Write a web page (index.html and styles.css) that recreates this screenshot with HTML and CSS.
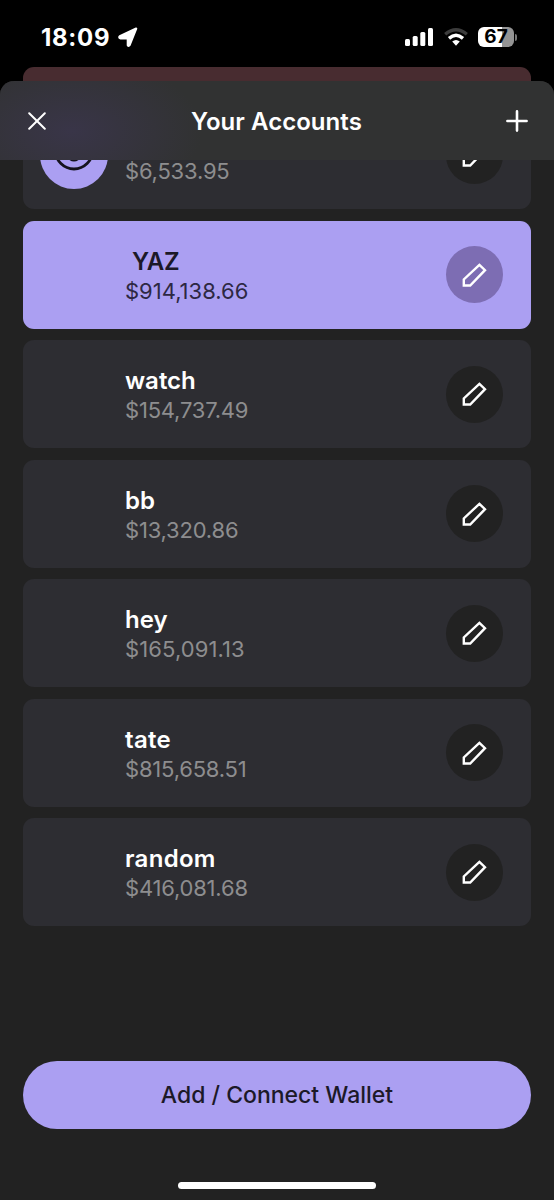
FILE: index.html
```html
<!DOCTYPE html>
<html lang="en">
<head>
<meta charset="utf-8">
<title>Your Accounts</title>
<link rel="stylesheet" href="styles.css">
</head>
<body>
<svg class="defs" width="0" height="0" aria-hidden="true">
  <symbol id="pencil" viewBox="-14 -14 28 28">
    <path d="M4.4 -10.2 L10 -4.8 L-4.8 10.5 H-11.2 V4.5 Z" fill="none" stroke="#fff" stroke-width="2.4"/>
  </symbol>
</svg>
<div class="phone">
  <div class="status">
    <div class="clock">18:09</div>
    <svg class="location" width="20" height="21" viewBox="0 0 20 21"><path d="M18.2 1.6 L11.6 18.2 Q10.6 19.6 9.8 18.2 V11.4 H2.4 Q.6 10.4 1.8 9.2 Z" fill="#fff" stroke="#fff" stroke-width="2.2" stroke-linejoin="round"/></svg>
    <svg class="signal" width="28" height="18" viewBox="0 0 28 18" fill="#fff"><rect y="11" width="5" height="7" rx="1.5"/><rect x="7.7" y="8" width="5" height="10" rx="1.5"/><rect x="15.3" y="4" width="5" height="14" rx="1.5"/><rect x="23" width="5" height="18" rx="1.5"/></svg>
    <svg class="wifi" width="24" height="18" viewBox="0 0 24 18" fill="none" stroke="#fff" stroke-width="3.4"><path d="M1.2 6.3 Q12 -2.6 22.8 6.3" stroke="#3c3c3c"/><path d="M5 10.4 Q12 4.3 19 10.4"/><path d="M8.2 13.6 Q12 10.4 15.8 13.6 L12 17.8 Z" fill="#fff" stroke="none"/></svg>
    <div class="battery"><span>67</span></div><i class="nub"></i>
  </div>
  <div class="sheet-behind"></div>
  <div class="sheet">
    <header class="header">
      <svg width="18" height="18" viewBox="0 0 18 18" stroke="#fff" stroke-width="2" stroke-linecap="round"><path d="M1.2 1.2 L16.8 16.8 M16.8 1.2 L1.2 16.8"/></svg>
      <h1>Your Accounts</h1>
      <svg width="22" height="22" viewBox="0 0 22 22" stroke="#fff" stroke-width="2.6" stroke-linecap="round"><path d="M11 1.4 V20.6 M1.4 11 H20.6"/></svg>
    </header>
    <main class="list">
      <div class="card">
        <div class="avatar"><svg width="68" height="68" viewBox="0 0 68 68"><circle cx="34" cy="34" r="34" fill="#ab9ff2"/><circle cx="34" cy="29.5" r="18.5" fill="none" stroke="#15131d" stroke-width="2.8"/><path d="M29 37 Q34 41.5 39 37" fill="none" stroke="#15131d" stroke-width="2.6"/></svg></div>
        <div class="info"><div class="name"></div><div class="balance">$6,533.95</div></div>
        <div class="edit"><svg width="28" height="28"><use href="#pencil"/></svg></div>
      </div>
      <div class="card selected">
        <div class="avatar"></div>
        <div class="info"><div class="name indented">YAZ</div><div class="balance">$914,138.66</div></div>
        <div class="edit"><svg width="28" height="28"><use href="#pencil"/></svg></div>
      </div>
      <div class="card">
        <div class="avatar"></div>
        <div class="info"><div class="name">watch</div><div class="balance">$154,737.49</div></div>
        <div class="edit"><svg width="28" height="28"><use href="#pencil"/></svg></div>
      </div>
      <div class="card">
        <div class="avatar"></div>
        <div class="info"><div class="name">bb</div><div class="balance">$13,320.86</div></div>
        <div class="edit"><svg width="28" height="28"><use href="#pencil"/></svg></div>
      </div>
      <div class="card">
        <div class="avatar"></div>
        <div class="info"><div class="name">hey</div><div class="balance wide">$165,091.13</div></div>
        <div class="edit"><svg width="28" height="28"><use href="#pencil"/></svg></div>
      </div>
      <div class="card">
        <div class="avatar"></div>
        <div class="info"><div class="name spaced">tate</div><div class="balance">$815,658.51</div></div>
        <div class="edit"><svg width="28" height="28"><use href="#pencil"/></svg></div>
      </div>
      <div class="card">
        <div class="avatar"></div>
        <div class="info"><div class="name spaced">random</div><div class="balance">$416,081.68</div></div>
        <div class="edit"><svg width="28" height="28"><use href="#pencil"/></svg></div>
      </div>
    </main>
    <footer class="footer">
      <div class="connect">Add / Connect Wallet</div>
      <div class="home"></div>
    </footer>
  </div>
</div>
</body>
</html>
```
FILE: styles.css
```css
* { box-sizing: border-box; }
body { margin: 0; background: #000; font-family: Inter, "Liberation Sans", sans-serif; }
svg { display: block; flex: none; }
.defs { position: absolute; }
.phone { width: 554px; height: 1200px; overflow: hidden; display: flex; flex-direction: column; }
.status { height: 67px; flex: none; padding: 7px 40px 0 41px; display: flex; align-items: center; color: #fff; }
.clock { font-size: 24px; font-weight: 700; width: 77px; white-space: nowrap; letter-spacing: .7px; }
.location { margin-top: 1px; }
.signal { margin-left: auto; }
.wifi { margin: 0 10px 0 11px; }
.battery { width: 36px; height: 20px; border-radius: 6px; background: linear-gradient(90deg, #fff 67%, #949494 67%); color: #000; font-size: 19px; line-height: 20px; font-weight: 700; text-align: center; }
.nub { width: 2px; height: 7px; margin: 0 -3px 0 1px; border-radius: 0 2px 2px 0; background: #777; }
.sheet-behind { height: 14px; flex: none; margin: 0 23px; border-radius: 11px 11px 0 0; background: #482c30; }
.sheet { flex: 1; min-height: 0; display: flex; flex-direction: column; background: #222; border-radius: 14px 14px 0 0; overflow: hidden; }
.header { height: 79px; flex: none; padding: 1px 26px 0 28px; display: flex; align-items: center; justify-content: space-between; background: radial-gradient(ellipse 130px 75px at 72px 50px, #393548, rgba(57, 53, 72, 0)), #313232; }
.header h1 { margin: 1px 0 0 1px; font-size: 24px; line-height: 30px; font-weight: 600; letter-spacing: .05px; color: #fff; }
.list { flex: 1; min-height: 0; overflow: hidden; padding: 0 23px; display: flex; flex-direction: column; gap: 11.5px; }
.card { height: 108px; flex: none; padding: 0 28px 0 17px; border-radius: 11px; display: flex; align-items: center; background: #2d2d32; }
.card:first-child { margin-top: -58.8px; }
.avatar { width: 68px; height: 68px; flex: none; }
.info { flex: 1; margin-left: 17px; padding-top: 3px; }
.name { height: 30px; font-size: 24px; line-height: 30px; font-weight: 600; color: #fff; }
.spaced { letter-spacing: .3px; }
.indented { padding-left: 7px; letter-spacing: -.4px; }
.balance { padding: 4px 0 5px; font-size: 22px; line-height: 20px; letter-spacing: -.2px; color: #8d8d8f; }
.wide { letter-spacing: .1px; }
.selected .balance { color: #2d2843; letter-spacing: 0; }
.edit { width: 57px; height: 57px; border-radius: 50%; background: #222; display: grid; place-items: center; }
.selected { background: #ab9ff2; }
.selected .name { color: #1c1928; }
.selected .edit { background: #7d6db3; }
.footer { height: 140px; flex: none; padding: 1px 23px 0; }
.connect { height: 68px; border-radius: 34px; background: #ab9ff2; color: #1c1928; font-size: 23px; font-weight: 500; line-height: 68px; text-align: center; }
.home { width: 198px; height: 7px; margin: 53px auto 0; border-radius: 4px; background: #fff; }
```
